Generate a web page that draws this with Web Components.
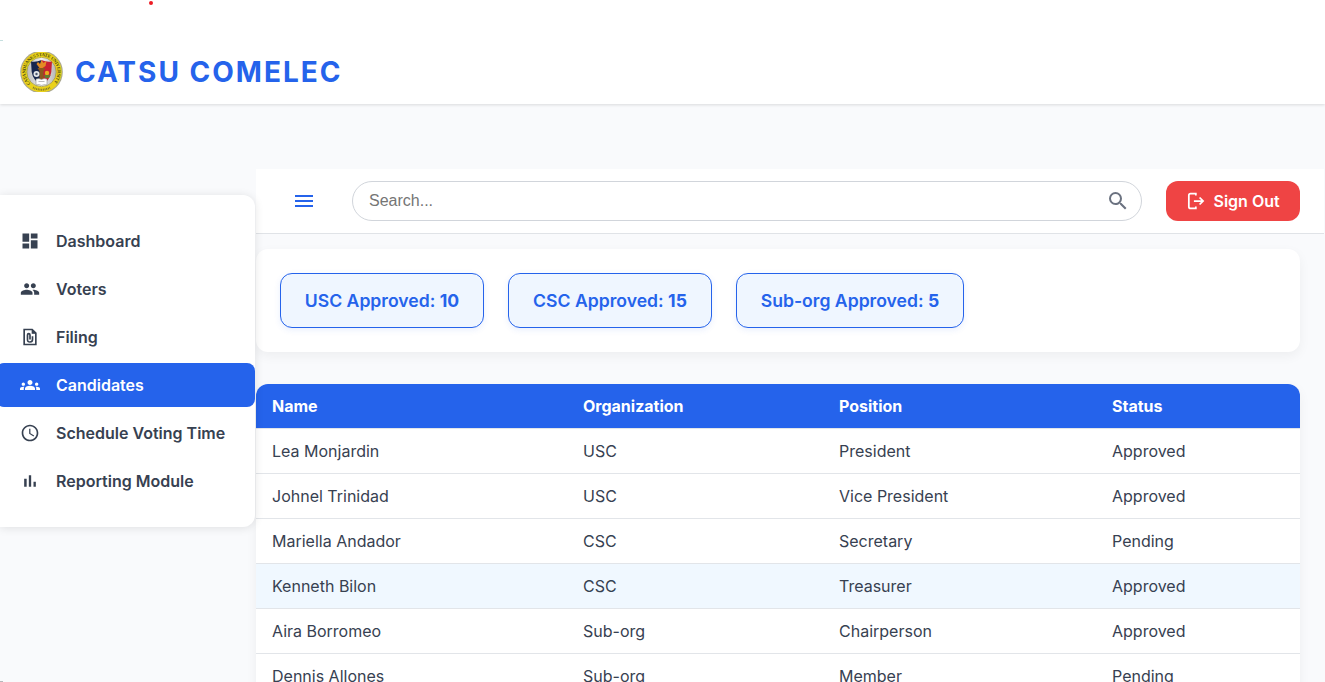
<!DOCTYPE html>
<html lang="en">
<head>
<meta charset="utf-8">
<title>CATSU COMELEC</title>
<style>
html, body { margin: 0; height: 100%; overflow: hidden; background: #f9fafc; }
body { font-family: Inter, "Liberation Sans", sans-serif; font-size: 16px; color: #374151; }
</style>
</head>
<body>
<comelec-app></comelec-app>

<script>
const define = (name, html, setup) => {
  const template = document.createElement('template');
  template.innerHTML = html;
  customElements.define(name, class extends HTMLElement {
    constructor() {
      super();
      this.attachShadow({ mode: 'open' }).append(template.content.cloneNode(true));
    }
    connectedCallback() { if (setup) setup(this, this.shadowRoot); }
  });
};

const ICONS = {
  dashboard: '<path d="M3 13h8V3H3v10zm0 8h8v-6H3v6zm10 0h8V11h-8v10zm0-18v6h8V3h-8z"/>',
  people: '<path d="M16 11c1.66 0 2.99-1.34 2.99-3S17.66 5 16 5c-1.66 0-3 1.34-3 3s1.34 3 3 3zm-8 0c1.66 0 2.99-1.34 2.99-3S9.66 5 8 5C6.34 5 5 6.34 5 8s1.34 3 3 3zm0 2c-2.33 0-7 1.17-7 3.5V19h14v-2.5c0-2.33-4.67-3.5-7-3.5zm8 0c-.29 0-.62.02-.97.05 1.16.84 1.97 1.97 1.97 3.45V19h6v-2.5c0-2.33-4.67-3.5-7-3.5z"/>',
  file: '<path d="M15 2H4v20h16V7l-5-5zM6 20V4h8v4h4v12H6z"/><path d="M14.500 3.500v4h4z"/><path d="M11 17a1 1 0 0 1-1-1V9.500a.5.5 0 0 1 1 0V15h2V9.500a2.500 2.500 0 0 0-5 0V15a4 4 0 0 0 8 0v-4h-2v4a2 2 0 0 1-2 2z"/>',
  groups: '<path d="M12 12.750c1.630 0 3.070.390 4.240.900 1.080.480 1.760 1.560 1.760 2.730V18H6v-1.610c0-1.180.680-2.260 1.760-2.730 1.170-.520 2.610-.910 4.240-.910zM4 13c1.100 0 2-.900 2-2s-.900-2-2-2-2 .900-2 2 .900 2 2 2zm1.130 1.100C4.760 14.040 4.390 14 4 14c-.990 0-1.930.210-2.780.580C.480 14.900 0 15.620 0 16.430V18h4.500v-1.610c0-.830.230-1.610.630-2.290zM20 13c1.100 0 2-.900 2-2s-.900-2-2-2-2 .900-2 2 .900 2 2 2zm4 3.430c0-.810-.480-1.530-1.220-1.850-.850-.370-1.790-.580-2.780-.580-.390 0-.760.040-1.130.100.400.680.630 1.460.630 2.290V18H24v-1.570zM12 6c1.660 0 3 1.340 3 3s-1.340 3-3 3-3-1.340-3-3 1.340-3 3-3z"/>',
  clock: '<path d="M11.990 2C6.470 2 2 6.480 2 12s4.470 10 9.990 10C17.520 22 22 17.520 22 12S17.520 2 11.990 2zM12 20c-4.420 0-8-3.580-8-8s3.580-8 8-8 8 3.580 8 8-3.580 8-8 8zm.500-13H11v6l5.250 3.150.750-1.230-4.500-2.670z"/>',
  bars: '<path d="M5 9.200h3V19H5zM10.600 5h2.800v14h-2.800zm5.600 8H19v6h-2.800z"/>',
  menu: '<path d="M3 18h18v-2H3v2zm0-5h18v-2H3v2zm0-7v2h18V6H3z"/>',
  search: '<path d="M15.500 14h-.790l-.280-.270A6.471 6.471 0 0 0 16 9.500 6.500 6.500 0 1 0 9.500 16c1.610 0 3.090-.590 4.230-1.570l.270.280v.790l5 4.990L20.490 19l-4.990-5zm-6 0C7.010 14 5 11.990 5 9.500S7.010 5 9.500 5 14 7.010 14 9.500 11.990 14 9.500 14z"/>',
  signout: '<path d="M11.800 5.500V3.200H5.400q-2 0-2 2v13.600q0 2 2 2h6.400v-2.300M9.500 12H20M16.300 7.800l4.200 4.200-4.200 4.200" fill="none" stroke="currentColor" stroke-width="2.100"/>'
};

define('ui-icon', `
<style>
:host { display: block; flex: none; width: var(--size, 20px); height: var(--size, 20px); }
svg { display: block; width: 100%; height: 100%; fill: currentColor; }
</style>
<svg viewBox="0 0 24 24" aria-hidden="true"></svg>`,
(host, root) => { root.querySelector('svg').innerHTML = ICONS[host.getAttribute('name')]; });

define('university-seal', `
<style>
:host { display: block; flex: none; width: 43px; height: 40px; }
svg { display: block; }
text { font-family: "Liberation Serif", serif; font-size: 4.700px; font-weight: 700; fill: #4c4a12; }
</style>
<svg width="43" height="40" viewBox="0 0 43 40">
  <defs>
    <linearGradient id="silver"><stop stop-color="#b9b9ba"/><stop offset=".5" stop-color="#f1f1f1"/><stop offset="1" stop-color="#b5b5b7"/></linearGradient>
    <path id="ring" d="M10.500 31.700A16 16 0 1 1 32.500 31.700"/>
  </defs>
  <circle cx="21.500" cy="20" r="21.300" fill="#aaa78f"/>
  <circle cx="21.500" cy="20" r="20.200" fill="#ead21a"/>
  <text><textPath href="#ring" textLength="74">CATANDUANES STATE UNIVERSITY</textPath></text>
  <path d="M13 35.500A17.600 17.600 0 0 0 30 35.500" fill="none" stroke="#81782a" stroke-width="2" stroke-dasharray="1 .7"/>
  <circle cx="21.500" cy="20" r="14.700" fill="url(#silver)" stroke="#aa9d37" stroke-width=".8"/>
  <path d="M11 9.500q5.500 1 10.500-1.500v24Q13 29 11.700 20z" fill="#17264e"/>
  <path d="M32 9.500q-5.500 1-10.500-1.500v24Q30 29 31.300 20z" fill="#c92132"/>
  <path d="M18 10l2 2 1.500-4 2 3 3-2-1 5-3 2h-3l-3-4z" fill="#e38b24"/>
  <path d="M17.500 16h8l-2 3v8h-4v-8z" fill="#8c591e"/>
  <circle cx="16.500" cy="22" r="3" fill="#e4e7ea"/><circle cx="16.500" cy="22" r="1.200" fill="#4b5671"/>
  <circle cx="27" cy="21" r="2.200" fill="#e8ad20"/><path d="M24 23h6.500l-1.500 3h-4z" fill="#637b30"/>
  <path d="M16 27q3-1 5.500.5Q24 26 27 27v6q-3-.8-5.500.4Q19 32 16 33z" fill="#fff" stroke="#77786e" stroke-width=".5"/>
  <path d="M18.500 29.500h6" stroke="#aaa" stroke-width=".8"/>
</svg>`);

define('site-header', `
<style>
:host { display: flex; box-sizing: border-box; height: 104px; padding: 40px 20px 0; align-items: center; gap: 12px; background: #fff; box-shadow: 0 1px 3px rgba(0,0,0,.13); position: relative; }
h1 { margin: 0; font-size: 28px; line-height: 40px; font-weight: 700; letter-spacing: 2px; color: #2563eb; white-space: nowrap; }
.dot { position: absolute; left: 149px; top: 1px; width: 4px; height: 4px; border-radius: 50%; background: #ed1c24; }
.tick { position: absolute; left: 0; top: 40px; width: 3px; height: 1px; background: #c5dfdf; }
</style>
<university-seal></university-seal><h1><slot></slot></h1><i class="dot"></i><i class="tick"></i>`);

define('nav-item', `
<style>
:host { display: flex; box-sizing: border-box; height: 44px; margin-left: -4px; padding-left: 24px; align-items: center; gap: 16px; border-radius: 8px; font-weight: 600; white-space: nowrap; }
:host([active]) { background: #2563eb; color: #fff; }
</style>
<ui-icon></ui-icon><span><slot></slot></span>`,
(host, root) => {
  const icon = document.createElement('ui-icon');
  icon.setAttribute('name', host.getAttribute('icon'));
  root.querySelector('ui-icon').replaceWith(icon);
});

define('side-nav', `
<style>
:host { display: flex; flex-direction: column; gap: 4px; box-sizing: border-box; width: 255px; height: 332px; padding: 24px 0; background: #fff; border-radius: 0 12px 12px 0; box-shadow: 0 1px 10px rgba(0,0,0,.11); }
</style>
<nav-item icon="dashboard">Dashboard</nav-item>
<nav-item icon="people">Voters</nav-item>
<nav-item icon="file">Filing</nav-item>
<nav-item icon="groups" active>Candidates</nav-item>
<nav-item icon="clock">Schedule Voting Time</nav-item>
<nav-item icon="bars">Reporting Module</nav-item>`);

define('search-field', `
<style>
:host { display: flex; box-sizing: border-box; flex: 1; height: 40px; padding: 0 11px 0 16px; align-items: center; justify-content: space-between; border: 1px solid #d1d5db; border-radius: 20px; background: #fff; --size: 24px; color: #6b7280; }
span { font: 16px/20px "Liberation Sans", Arial, sans-serif; color: #757575; }
</style>
<span><slot></slot></span><ui-icon name="search"></ui-icon>`);

define('sign-out', `
<style>
:host { display: flex; box-sizing: border-box; width: 134px; height: 40px; padding-left: 19.500px; align-items: center; gap: 8px; border-radius: 12px; background: #ef4444; color: #fff; font-weight: 600; white-space: nowrap; }
</style>
<ui-icon name="signout"></ui-icon><span><slot></slot></span>`);

define('tool-bar', `
<style>
:host { display: flex; box-sizing: border-box; height: 65px; margin-right: 1px; padding: 0 24px 0 36px; align-items: center; background: #fff; border-bottom: 1px solid #e0e3e7; }
.menu { --size: 24px; color: #2563eb; margin-right: 36px; }
sign-out { margin-left: 24px; }
</style>
<ui-icon class="menu" name="menu"></ui-icon><search-field>Search...</search-field><sign-out>Sign Out</sign-out>`);

define('count-chip', `
<style>
:host { display: flex; box-sizing: border-box; width: var(--w, 204px); height: 55px; align-items: center; justify-content: center; border: 1px solid #2563eb; border-radius: 12px; background: #eff6ff; color: #2563eb; font-size: 17.600px; font-weight: 600; box-shadow: 0 2px 6px rgba(37,99,235,.1); white-space: nowrap; }
::slotted(b) { font-weight: 700; }
</style>
<span><slot></slot></span>`);

define('approval-summary', `
<style>
:host { display: flex; box-sizing: border-box; height: 103px; margin: 15px 25px 0 0; padding: 24px; gap: 24px; background: #fff; border-radius: 12px; box-shadow: 0 4px 12px rgba(0,0,0,.05); }
.wide { --w: 228px; }
</style>
<count-chip>USC Approved: <b>10</b></count-chip><count-chip>CSC Approved: <b>15</b></count-chip><count-chip class="wide">Sub-org Approved: <b>5</b></count-chip>`);

define('table-row', `
<style>
:host { display: grid; box-sizing: border-box; grid-template-columns: 311px 256px 273px 1fr; height: 45px; align-items: center; border-bottom: 1px solid #e2e5e9; background: #fff; }
:host([head]) { background: #2563eb; background-clip: padding-box; color: #fff; font-weight: 700; }
:host([hover]) { background: #f0f8ff; }
span { padding-left: 16px; white-space: nowrap; }
</style>`,
(host, root) => {
  for (const text of host.getAttribute('cells').split('|')) {
    const cell = document.createElement('span');
    cell.textContent = text;
    root.append(cell);
  }
});

define('candidate-table', `
<style>
:host { display: block; margin: 32px 25px 0 0; background: #fff; border-radius: 12px; box-shadow: 0 4px 12px rgba(0,0,0,.05); overflow: hidden; }
</style>
<table-row head cells="Name|Organization|Position|Status"></table-row>
<table-row cells="Lea Monjardin|USC|President|Approved"></table-row>
<table-row cells="Johnel Trinidad|USC|Vice President|Approved"></table-row>
<table-row cells="Mariella Andador|CSC|Secretary|Pending"></table-row>
<table-row hover cells="Kenneth Bilon|CSC|Treasurer|Approved"></table-row>
<table-row cells="Aira Borromeo|Sub-org|Chairperson|Approved"></table-row>
<table-row cells="Dennis Allones|Sub-org|Member|Pending"></table-row>`);

define('comelec-app', `
<style>
:host { display: block; position: relative; height: 682px; overflow: hidden; }
.body { display: grid; grid-template-columns: 256px minmax(0, 1fr); padding-top: 65px; }
side-nav { margin-top: 26px; position: relative; z-index: 1; }
main { min-width: 0; }
.edge { position: absolute; left: 0; bottom: 0; width: 3px; height: 1px; background: #b5b8bb; }
</style>
<site-header>CATSU COMELEC</site-header>
<div class="body">
  <side-nav></side-nav>
  <main><tool-bar></tool-bar><approval-summary></approval-summary><candidate-table></candidate-table></main>
</div>
<i class="edge"></i>`);
</script>
</body>
</html>
